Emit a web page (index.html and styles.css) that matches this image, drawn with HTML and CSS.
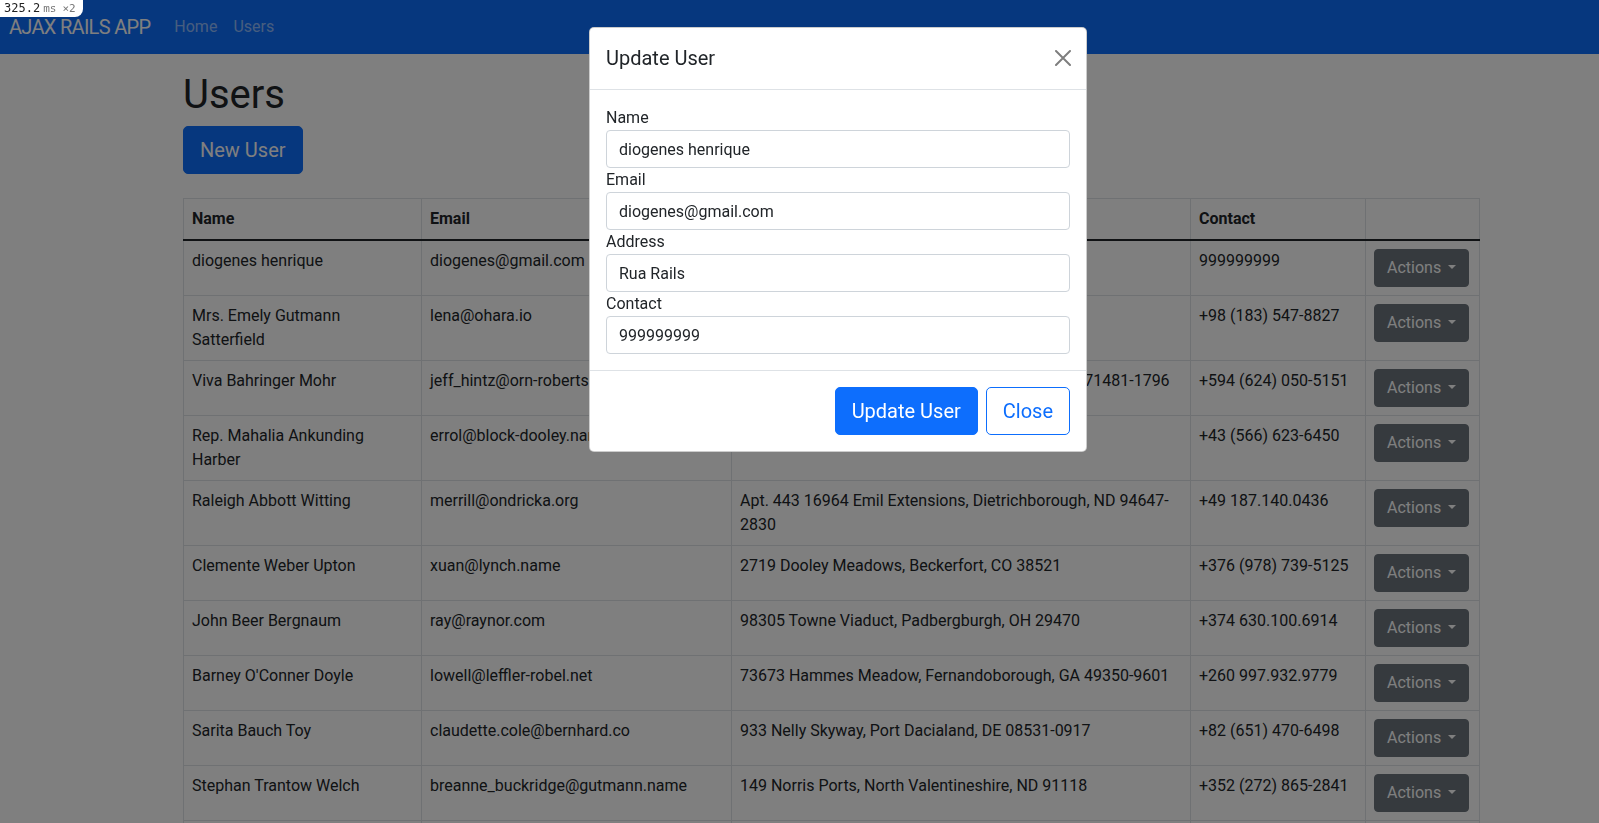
FILE: index.html
```html
<!DOCTYPE html>
<html lang="en">
<head>
<meta charset="utf-8">
<title>Ajax Rails App</title>
<link rel="stylesheet" href="styles.css">
</head>
<body>
<div class="mp"><span class="mp-num">325.2</span><span class="mp-unit">ms</span><span class="mp-count">×2</span></div>

<nav class="navbar">
  <a class="brand" href="#">AJAX RAILS APP</a>
  <ul class="nav">
    <li><a href="#">Home</a></li>
    <li><a href="#">Users</a></li>
  </ul>
</nav>

<main class="container">
  <h1 class="title">Users</h1>
  <div class="toolbar"><button class="btn btn-lg btn-primary">New User</button></div>

  <table class="users">
    <colgroup>
      <col class="col-name"><col class="col-email"><col class="col-address"><col class="col-contact"><col class="col-actions">
    </colgroup>
    <thead>
      <tr><th>Name</th><th>Email</th><th>Address</th><th>Contact</th><th></th></tr>
    </thead>
    <tbody>
      <tr><td>diogenes henrique</td><td>diogenes@gmail.com</td><td>Rua Rails</td><td>999999999</td><td><div class="dropdown"><button class="btn btn-secondary dropdown-toggle">Actions</button></div></td></tr>
      <tr><td>Mrs. Emely Gutmann Satterfield</td><td>lena@ohara.io</td><td>8760 Bode Shoal, Lake Alvin, IA 52102</td><td>+98 (183) 547-8827</td><td><div class="dropdown"><button class="btn btn-secondary dropdown-toggle">Actions</button></div></td></tr>
      <tr><td>Viva Bahringer Mohr</td><td>jeff_hintz@orn-roberts.biz</td><td>Suite 540 6034 Kuhn Crossing, Port Irvinton, WV 71481-1796</td><td>+594 (624) 050-5151</td><td><div class="dropdown"><button class="btn btn-secondary dropdown-toggle">Actions</button></div></td></tr>
      <tr><td>Rep. Mahalia Ankunding Harber</td><td>errol@block-dooley.name</td><td>5493 Kunze Harbors, New Dong, TX 80423</td><td>+43 (566) 623-6450</td><td><div class="dropdown"><button class="btn btn-secondary dropdown-toggle">Actions</button></div></td></tr>
      <tr><td>Raleigh Abbott Witting</td><td>merrill@ondricka.org</td><td>Apt. 443 16964 Emil Extensions, Dietrichborough, ND 94647-2830</td><td>+49 187.140.0436</td><td><div class="dropdown"><button class="btn btn-secondary dropdown-toggle">Actions</button></div></td></tr>
      <tr><td>Clemente Weber Upton</td><td>xuan@lynch.name</td><td>2719 Dooley Meadows, Beckerfort, CO 38521</td><td>+376 (978) 739-5125</td><td><div class="dropdown"><button class="btn btn-secondary dropdown-toggle">Actions</button></div></td></tr>
      <tr><td>John Beer Bergnaum</td><td>ray@raynor.com</td><td>98305 Towne Viaduct, Padbergburgh, OH 29470</td><td>+374 630.100.6914</td><td><div class="dropdown"><button class="btn btn-secondary dropdown-toggle">Actions</button></div></td></tr>
      <tr><td>Barney O'Conner Doyle</td><td>lowell@leffler-robel.net</td><td>73673 Hammes Meadow, Fernandoborough, GA 49350-9601</td><td>+260 997.932.9779</td><td><div class="dropdown"><button class="btn btn-secondary dropdown-toggle">Actions</button></div></td></tr>
      <tr><td>Sarita Bauch Toy</td><td>claudette.cole@bernhard.co</td><td>933 Nelly Skyway, Port Dacialand, DE 08531-0917</td><td>+82 (651) 470-6498</td><td><div class="dropdown"><button class="btn btn-secondary dropdown-toggle">Actions</button></div></td></tr>
      <tr><td>Stephan Trantow Welch</td><td>breanne_buckridge@gutmann.name</td><td>149 Norris Ports, North Valentineshire, ND 91118</td><td>+352 (272) 865-2841</td><td><div class="dropdown"><button class="btn btn-secondary dropdown-toggle">Actions</button></div></td></tr>
      <tr><td>Lorenzo Kertzmann Hane</td><td>hugh@schmitt.info</td><td>412 Wisoky Pike, Lake Jeramy, KS 66210</td><td>+61 (402) 118-3375</td><td><div class="dropdown"><button class="btn btn-secondary dropdown-toggle">Actions</button></div></td></tr>
    </tbody>
  </table>
</main>

<div class="backdrop"></div>

<div class="modal" role="dialog">
  <div class="modal-header">
    <h5 class="modal-title">Update User</h5>
    <button class="btn-close" aria-label="Close">
      <svg viewBox="0 0 16 16" width="16" height="16"><path d="M1 1L15 15M15 1L1 15" stroke="#000" stroke-width="2" stroke-linecap="round" fill="none"/></svg>
    </button>
  </div>
  <form class="modal-form">
    <div class="modal-body">
      <label class="field-label" for="f-name">Name</label>
      <input class="form-control" id="f-name" type="text" value="diogenes henrique">
      <label class="field-label" for="f-email">Email</label>
      <input class="form-control" id="f-email" type="text" value="diogenes@gmail.com">
      <label class="field-label" for="f-address">Address</label>
      <input class="form-control" id="f-address" type="text" value="Rua Rails">
      <label class="field-label" for="f-contact">Contact</label>
      <input class="form-control" id="f-contact" type="text" value="999999999">
    </div>
    <div class="modal-footer">
      <button type="button" class="btn btn-lg btn-primary">Update User</button>
      <button type="button" class="btn btn-lg btn-outline-primary">Close</button>
    </div>
  </form>
</div>
</body>
</html>
```

FILE: styles.css
```css
* {
  box-sizing: border-box;
}

body {
  margin: 0;
  font-family: Roboto, "Liberation Sans", sans-serif;
  font-size: 16px;
  line-height: 1.5;
  color: #212529;
  background: #fff;
}

/* mini profiler badge */
.mp {
  position: fixed;
  top: 0;
  left: 0;
  z-index: 30;
  display: flex;
  align-items: baseline;
  height: 17px;
  padding: 0 7px 0 4px;
  background: #fff;
  border-bottom-right-radius: 8px;
  font-family: "DejaVu Sans Mono", "Liberation Mono", monospace;
  line-height: 17px;
}

.mp-num {
  font-size: 12px;
  color: #222;
}

.mp-unit {
  font-size: 11px;
  color: #777;
  margin-left: 3px;
}

.mp-count {
  font-size: 11px;
  color: #777;
  margin-left: 6px;
}

/* navbar */
.navbar {
  display: flex;
  align-items: center;
  height: 54px;
  padding: 0 8px 0 9px;
  background: #0d6efd;
}

.brand {
  color: #fff;
  font-size: 20px;
  letter-spacing: -0.7px;
  line-height: 30px;
  margin-right: 16px;
  text-decoration: none;
}

.nav {
  display: flex;
  list-style: none;
  margin: 0;
  padding: 0;
}

.nav a {
  display: block;
  padding: 0 8px;
  color: rgba(255, 255, 255, 0.55);
  text-decoration: none;
}

/* page */
.container {
  width: 1296px;
  margin-left: 183px;
}

.title {
  font-size: 40px;
  font-weight: 400;
  line-height: 48px;
  margin: 17px 0 7px;
}

.toolbar {
  display: flex;
  margin-bottom: 24px;
}

.btn {
  display: inline-block;
  font-family: inherit;
  font-size: 16px;
  font-weight: 400;
  line-height: 24px;
  padding: 6px 12px;
  border: 1px solid transparent;
  border-radius: 4px;
  cursor: pointer;
  text-align: center;
  white-space: nowrap;
}

.btn-lg {
  font-size: 20px;
  line-height: 30px;
  padding: 8px 16px;
  border-radius: 5px;
}

.btn-primary {
  background: #0d6efd;
  border-color: #0d6efd;
  color: #fff;
}

.btn-outline-primary {
  background: #fff;
  border-color: #0d6efd;
  color: #0d6efd;
}

.btn-secondary {
  background: #6c757d;
  border-color: #6c757d;
  color: #fff;
}

.dropdown {
  display: flex;
}

.dropdown-toggle::after {
  content: "";
  display: inline-block;
  margin-left: 7px;
  vertical-align: 4px;
  border-top: 4.8px solid;
  border-right: 4.8px solid transparent;
  border-left: 4.8px solid transparent;
  border-bottom: 0;
}

/* table */
.users {
  width: 1296px;
  table-layout: fixed;
  border-collapse: collapse;
  border: 1px solid #dee2e6;
  margin: 0;
}

.col-name { width: 238px; }
.col-email { width: 310px; }
.col-address { width: 459px; }
.col-contact { width: 175px; }
.col-actions { width: 114px; }

.users th,
.users td {
  padding: 8px;
  border: 1px solid #dee2e6;
  text-align: left;
  vertical-align: top;
}

.users th {
  font-weight: 700;
}

.users td:first-child {
  padding-right: 16px;
}

.users td:nth-child(3) {
  padding-right: 4px;
}

.users tbody tr:first-child td {
  border-top: 2px solid #212529;
}

/* modal */
.backdrop {
  position: fixed;
  inset: 0;
  z-index: 10;
  background: rgba(0, 0, 0, 0.5);
}

.modal {
  position: fixed;
  top: 27px;
  left: 589px;
  z-index: 20;
  width: 498px;
  background: #fff;
  border: 1px solid rgba(0, 0, 0, 0.2);
  border-radius: 5px;
}

.modal-header {
  display: flex;
  align-items: center;
  justify-content: space-between;
  padding: 15px 16px 16px;
  border-bottom: 1px solid #dee2e6;
}

.modal-title {
  margin: 0;
  font-size: 20px;
  font-weight: 400;
  line-height: 30px;
}

.btn-close {
  display: flex;
  padding: 0;
  margin: 0 -1px 0 0;
  border: 0;
  background: transparent;
  opacity: 0.5;
  cursor: pointer;
}

.modal-form {
  margin: 0;
}

.modal-body {
  padding: 16px;
}

.field-label {
  display: block;
  line-height: 24px;
}

.form-control {
  display: block;
  width: 100%;
  height: 38px;
  padding: 6px 12px;
  font-family: inherit;
  font-size: 16px;
  line-height: 24px;
  color: #212529;
  background: #fff;
  border: 1px solid #ced4da;
  border-radius: 4px;
}

.modal-footer {
  display: flex;
  justify-content: flex-end;
  align-items: center;
  gap: 8px;
  padding: 16px;
  border-top: 1px solid #dee2e6;
}
```
